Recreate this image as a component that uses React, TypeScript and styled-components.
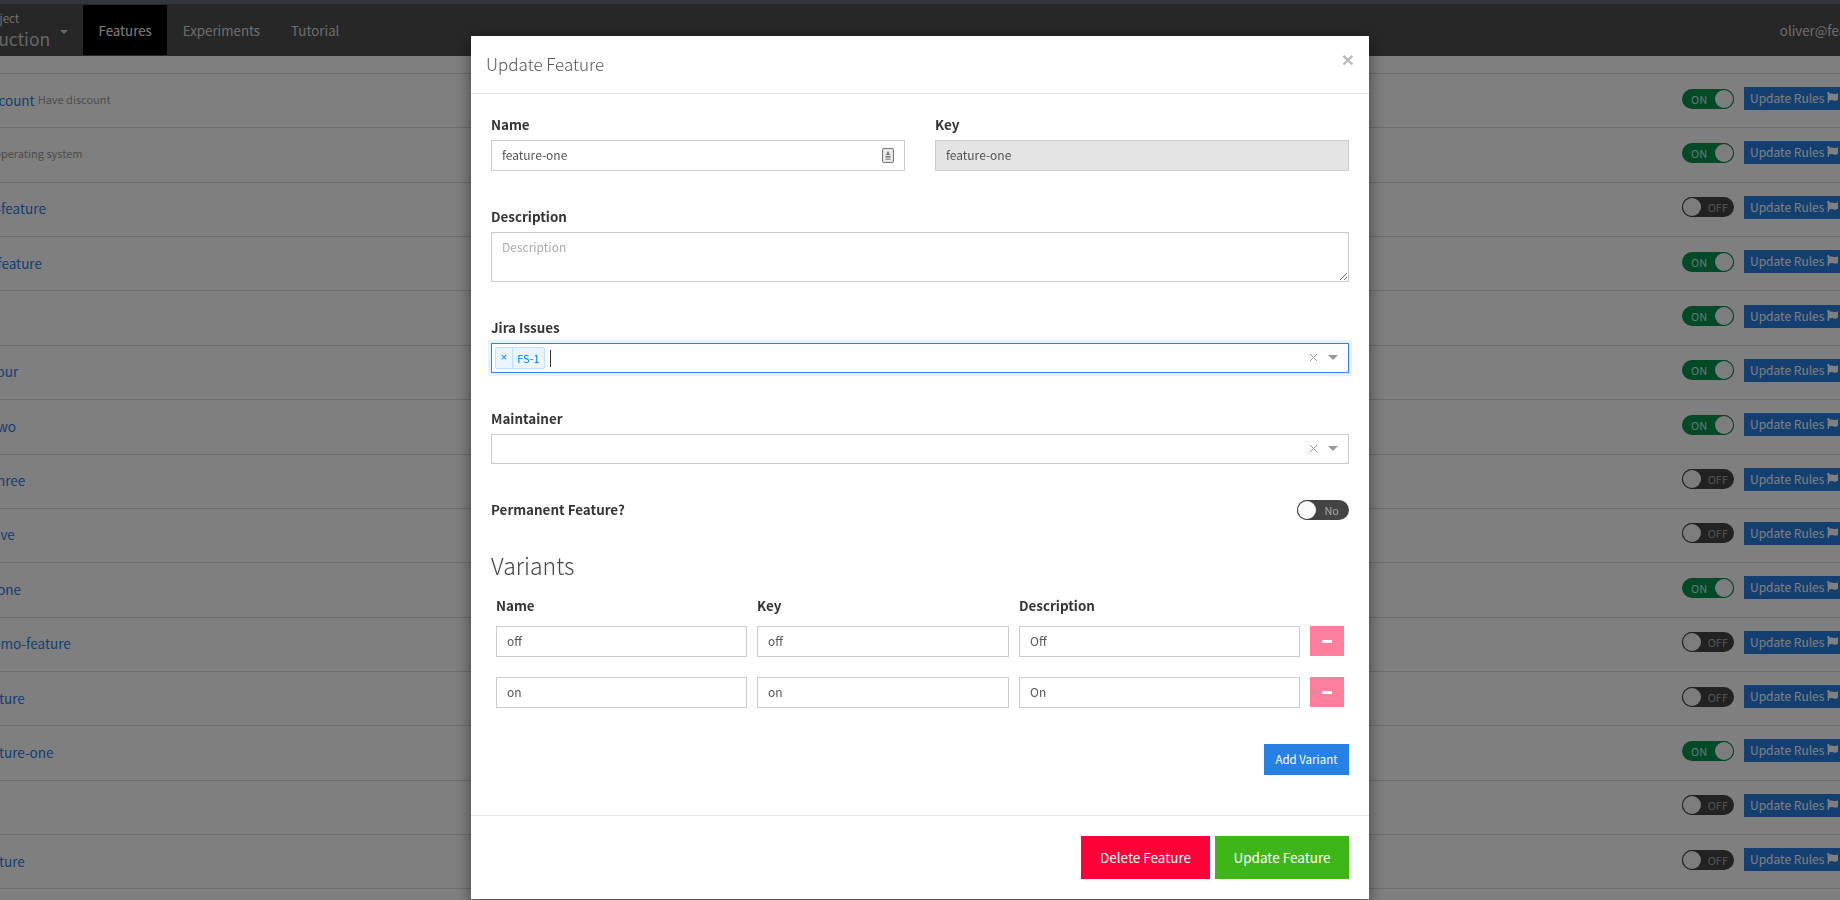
import React from 'react';
import styled, { createGlobalStyle } from 'styled-components';
import { FaFlag } from 'react-icons/fa';

const FONT = `"Noto Sans CJK JP", "Noto Sans", sans-serif`;
const ARIAL = `"Liberation Sans", sans-serif`;

const Global = createGlobalStyle`
  html, body { margin: 0; padding: 0; height: 100%; overflow: hidden; background: #fff; }
  body { font-family: ${FONT}; color: #333; }
  * { box-sizing: border-box; }
`;

const Strip = styled.div`height: 4px; background: #646a76;`;

const NavBar = styled.nav`
  display: flex;
  align-items: stretch;
  height: 52px;
  background: #4e4e4e;
  padding: 1px 15px 1px 0;
  margin: 0 -88px 0 -40px;
  color: #fff;
  font-size: 13.3px;
`;

const Project = styled.div`
  width: 123px;
  position: relative;
  display: flex;
  flex-direction: column;
  justify-content: center;
  line-height: 1;
`;
const ProjectSmall = styled.span`font-size: 11.5px; color: #ddd; margin-bottom: 5px; padding-left: 21px;`;
const ProjectBig = styled.span`font-size: 17.5px; color: #ccc; margin-left: -1px;`;
const Caret = styled.span`
  position: absolute;
  left: 100px;
  top: 25px;
  border-style: solid;
  border-width: 4px 4px 0;
  border-color: #ccc transparent transparent;
`;

const Tab = styled.a<{ $active?: boolean }>`
  display: flex;
  align-items: center;
  padding: 1px 15.5px 0;
  background: ${p => (p.$active ? '#000' : 'transparent')};
  color: ${p => (p.$active ? '#fff' : '#ddd')};
`;

const User = styled.span`
  margin-left: auto;
  display: flex;
  align-items: center;
  padding-top: 1px;
  color: #ddd;
`;

const List = styled.div`
  margin: 17px -8px 0 -20px;
  border-top: 1px solid #ddd;
`;

const Row = styled.div`
  display: flex;
  align-items: center;
  height: 54.36px;
  border-bottom: 1px solid #ddd;
  padding-bottom: 4.2px;
`;

const FeatureName = styled.a`
  color: #2780e3;
  font-size: 13.5px;
  padding-top: 2px;
`;

const FeatureDesc = styled.span`
  color: #999;
  font-size: 11px;
  margin-left: 3px;
`;

const RowActions = styled.div`
  margin-left: auto;
  display: flex;
  align-items: center;
  gap: 10px;
`;

const Track = styled.span<{ $on?: boolean }>`
  display: flex;
  flex-direction: ${p => (p.$on ? 'row' : 'row-reverse')};
  align-items: center;
  justify-content: space-between;
  width: 52px;
  height: 20px;
  padding: 1px;
  border-radius: 10px;
  background: ${p => (p.$on ? '#00944f' : '#444')};
  color: ${p => (p.$on ? '#d8eee2' : '#aaa')};
  font-size: 11px;
  line-height: 18px;
`;
const TrackText = styled.span<{ $on?: boolean; $modal?: boolean }>`
  padding: 0 ${p => (p.$modal ? 9 : 5)}px 0 ${p => (p.$on ? 8 : 0)}px;
`;
const Knob = styled.span<{ $on?: boolean }>`
  width: 18px;
  height: 18px;
  border-radius: 50%;
  background: #fafafa;
  flex: none;
  box-shadow: 0 0 0 1px ${p => (p.$on ? '#00944f' : '#444')};
`;

const RulesButton = styled.a`
  display: flex;
  align-items: center;
  gap: 3px;
  width: 104px;
  height: 23px;
  padding: 0 6px 2px;
  background: #2780e3;
  color: #fff;
  font-size: 12px;
  white-space: nowrap;
`;

const Backdrop = styled.div`
  position: fixed;
  inset: 0;
  background: rgba(0, 0, 0, 0.5);
  display: flex;
  justify-content: center;
  align-items: flex-start;
  padding-top: 36px;
`;

const Modal = styled.div`
  width: 898px;
  height: 863px;
  background: #fff;
  box-shadow: 0 5px 15px rgba(0, 0, 0, 0.5);
  flex: none;
`;

const ModalHeader = styled.header`
  height: 58px;
  padding: 0 15px;
  display: flex;
  align-items: center;
  justify-content: space-between;
  border-bottom: 1px solid #e5e5e5;
`;
const ModalTitle = styled.h4`
  margin: 0 0 2px;
  font-size: 17px;
  font-weight: 300;
  color: #555;
`;
const Close = styled.span`
  font-family: ${ARIAL};
  font-size: 21px;
  font-weight: 700;
  color: #bbb;
  line-height: 1;
  margin: 0 0 10px;
`;

const ModalBody = styled.div`
  padding: 21px 20px 0;
  display: flex;
  flex-direction: column;
  height: 721px;
`;

const TwoCols = styled.div`
  display: grid;
  grid-template-columns: 414px 414px;
  gap: 30px;
  margin-bottom: 36px;
`;

const Field = styled.div`
  display: flex;
  flex-direction: column;
  margin-bottom: 36px;
`;

const Label = styled.label`
  display: block;
  height: 20px;
  line-height: 18px;
  margin-bottom: 5px;
  font-size: 13.4px;
  font-weight: 700;
  color: #333;
`;

const TextInput = styled.input`
  width: 100%;
  height: 31px;
  border: 1px solid #ccc;
  border-radius: 0;
  padding: 0 10px 2px;
  font-family: ${FONT};
  font-size: 12px;
  color: #555;
  background: #fff;
  outline: none;
`;

const LockedInput = styled(TextInput)`
  background: #e4e4e4;
`;

const InputWrap = styled.div`
  position: relative;
`;

const FieldIcon = styled.svg`
  position: absolute;
  right: 11px;
  top: 8px;
`;

const TextArea = styled.textarea`
  width: 100%;
  height: 50px;
  display: block;
  border: 1px solid #ccc;
  border-radius: 0;
  padding: 5px 10px;
  font-family: ${FONT};
  font-size: 12px;
  color: #555;
  outline: none;
  resize: vertical;
  &::placeholder { color: #aaa; }
`;

const SelectBox = styled.div<{ $focus?: boolean }>`
  display: flex;
  align-items: center;
  height: 30px;
  padding: 0 10px 0 3px;
  border: 1px solid ${p => (p.$focus ? '#2684ff' : '#ccc')};
  box-shadow: ${p => (p.$focus ? '0 0 0 3px #e6f2ff' : 'none')};
  background: #fff;
`;

const Tag = styled.span`
  display: flex;
  height: 22px;
  width: 50px;
  border: 1px solid #c2e0ff;
  border-radius: 2px;
  background: #ebf5ff;
  color: #007eff;
  font-size: 11px;
  line-height: 20px;
`;
const TagRemove = styled.span`
  width: 17px;
  text-align: center;
  border-right: 1px solid #c2e0ff;
  font-family: ${ARIAL};
  font-size: 11px;
  line-height: 18px;
`;
const TagLabel = styled.span`
  flex: 1;
  text-align: center;
`;
const Cursor = styled.span`
  width: 1px;
  height: 17px;
  margin-left: 5px;
  background: #333;
`;
const ClearX = styled.svg`
  margin-left: auto;
  margin-bottom: 2px;
`;
const SelectArrow = styled.span`
  margin-left: 10px;
  margin-bottom: 2px;
  border-style: solid;
  border-width: 5px 5px 0;
  border-color: #999 transparent transparent;
`;

const ToggleRow = styled.div`
  display: flex;
  justify-content: space-between;
  align-items: center;
  height: 20px;
  margin-bottom: 31px;
`;
const ToggleLabel = styled(Label)`
  margin: 0;
`;

const SectionHeading = styled.h3`
  margin: 0 0 15px;
  height: 30px;
  line-height: 28px;
  font-size: 23px;
  font-weight: 300;
  color: #444;
`;

const VariantGrid = styled.div`
  display: grid;
  grid-template-columns: 251px 252px 281px 34px;
  column-gap: 10px;
  row-gap: 20px;
  padding: 0 5px;
`;
const HeadCell = styled(Label)`
  margin-bottom: -10px;
`;
const MinusButton = styled.button`
  width: 34px;
  height: 30px;
  border: 0;
  padding: 0;
  background: #ff7f9c;
  display: flex;
  align-items: center;
  justify-content: center;
`;
const MinusBar = styled.span`
  width: 10px;
  height: 3px;
  background: #fff;
`;

const AddRow = styled.div`
  display: flex;
  justify-content: flex-end;
  margin-top: 36px;
`;
const AddButton = styled.button`
  width: 85px;
  height: 31px;
  border: 0;
  padding: 0 0 2px;
  background: #2780e3;
  color: #fff;
  font-family: ${FONT};
  font-size: 11.5px;
`;

const ModalFooter = styled.footer`
  height: 84px;
  border-top: 1px solid #e5e5e5;
  padding: 20px;
  display: flex;
  justify-content: flex-end;
  gap: 5px;
`;
const FooterButton = styled.button<{ $color: string; $w: number }>`
  width: ${p => p.$w}px;
  height: 43px;
  border: 0;
  padding: 0 0 2px;
  background: ${p => p.$color};
  color: #fff;
  font-family: ${FONT};
  font-size: 13.5px;
`;

const rows: { name?: string; desc?: string; on: boolean }[] = [
  { name: 'discount', desc: 'Have discount', on: true },
  { name: 'ts', desc: 'operating system', on: true },
  { name: 'nu-feature', on: false },
  { name: 'm-feature', on: true },
  { name: 'ab', on: true },
  { name: 'a-four', on: true },
  { name: 'a-two', on: true },
  { name: 'a-three', on: false },
  { name: 'a-five', on: false },
  { name: 'm-one', on: true },
  { name: '-demo-feature', on: false },
  { name: 'feature', on: false },
  { name: 'feature-one', on: true },
  { name: 'ab', on: false },
  { name: 'feature', on: false },
];

const Toggle = ({ on, label, modal }: { on: boolean; label: string; modal?: boolean }) => (
  <Track $on={on}>
    <TrackText $on={on} $modal={modal}>{label}</TrackText>
    <Knob $on={on} />
  </Track>
);

const Select = ({ focus, children }: { focus?: boolean; children?: React.ReactNode }) => (
  <SelectBox $focus={focus}>
    {children}
    <ClearX width="9" height="9" viewBox="0 0 9 9">
      <path d="M1 1l7 7M8 1L1 8" stroke="#999" strokeWidth="1" fill="none" />
    </ClearX>
    <SelectArrow />
  </SelectBox>
);

const variants = [
  { name: 'off', key: 'off', desc: 'Off' },
  { name: 'on', key: 'on', desc: 'On' },
];

export default function App() {
  return (
    <>
      <Global />
      <Strip />
      <NavBar>
        <Project>
          <ProjectSmall>Project</ProjectSmall>
          <ProjectBig>Production</ProjectBig>
          <Caret />
        </Project>
        <Tab $active>Features</Tab>
        <Tab>Experiments</Tab>
        <Tab>Tutorial</Tab>
        <User>oliver@featureflow.io</User>
      </NavBar>
      <List>
        {rows.map((r, i) => (
          <Row key={i}>
            {r.name && <FeatureName>{r.name}</FeatureName>}
            {r.desc && <FeatureDesc>{r.desc}</FeatureDesc>}
            <RowActions>
              <Toggle on={r.on} label={r.on ? 'ON' : 'OFF'} />
              <RulesButton>
                Update Rules <FaFlag size={11} color="#fff" />
              </RulesButton>
            </RowActions>
          </Row>
        ))}
      </List>
      <Backdrop>
        <Modal>
          <ModalHeader>
            <ModalTitle>Update Feature</ModalTitle>
            <Close>×</Close>
          </ModalHeader>
          <ModalBody>
            <TwoCols>
              <div>
                <Label>Name</Label>
                <InputWrap>
                  <TextInput readOnly value="feature-one" />
                  <FieldIcon width="12" height="15" viewBox="0 0 12 15">
                    <rect x="0.5" y="0.5" width="11" height="14" rx="1.5" fill="#e8e8e8" stroke="#777" />
                    <path d="M6 3l2 4H4z" fill="#777" />
                    <rect x="3.5" y="8" width="5" height="1.5" fill="#777" />
                    <rect x="3.5" y="10.5" width="5" height="1.5" fill="#999" />
                  </FieldIcon>
                </InputWrap>
              </div>
              <div>
                <Label>Key</Label>
                <LockedInput readOnly value="feature-one" />
              </div>
            </TwoCols>
            <Field>
              <Label>Description</Label>
              <TextArea placeholder="Description" />
            </Field>
            <Field>
              <Label>Jira Issues</Label>
              <Select focus>
                <Tag>
                  <TagRemove>×</TagRemove>
                  <TagLabel>FS-1</TagLabel>
                </Tag>
                <Cursor />
              </Select>
            </Field>
            <Field>
              <Label>Maintainer</Label>
              <Select />
            </Field>
            <ToggleRow>
              <ToggleLabel>Permanent Feature?</ToggleLabel>
              <Toggle on={false} label="No" modal />
            </ToggleRow>
            <SectionHeading>Variants</SectionHeading>
            <VariantGrid>
              <HeadCell>Name</HeadCell>
              <HeadCell>Key</HeadCell>
              <HeadCell>Description</HeadCell>
              <span />
              {variants.map(v => (
                <React.Fragment key={v.key}>
                  <TextInput readOnly value={v.name} />
                  <TextInput readOnly value={v.key} />
                  <TextInput readOnly value={v.desc} />
                  <MinusButton><MinusBar /></MinusButton>
                </React.Fragment>
              ))}
            </VariantGrid>
            <AddRow>
              <AddButton>Add Variant</AddButton>
            </AddRow>
          </ModalBody>
          <ModalFooter>
            <FooterButton $color="#ff0039" $w={129}>Delete Feature</FooterButton>
            <FooterButton $color="#3fb618" $w={134}>Update Feature</FooterButton>
          </ModalFooter>
        </Modal>
      </Backdrop>
    </>
  );
}
